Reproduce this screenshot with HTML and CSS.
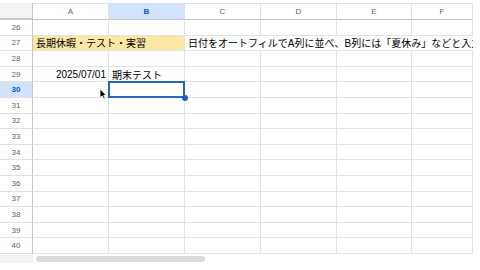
FILE: index.html
```html
<!DOCTYPE html>
<html lang="ja">
<head>
<meta charset="utf-8">
<link rel="stylesheet" href="styles.css">
</head>
<body>
<div class="page">
  <div class="sheet">
    <div class="corner"></div>
    <div class="ch">A</div>
    <div class="ch ch-sel">B</div>
    <div class="ch">C</div>
    <div class="ch">D</div>
    <div class="ch">E</div>
    <div class="ch">F</div>

    <div class="rh">26</div>
    <div class="c"></div><div class="c"></div><div class="c"></div><div class="c"></div><div class="c"></div><div class="c"></div>

    <div class="rh">27</div>
    <div class="c c-merge c-yellow">長期休暇・テスト・実習</div>
    <div class="c c-over">日付をオートフィルでA列に並べ、B列には「夏休み」などと入力してください</div>

    <div class="rh">28</div>
    <div class="c"></div><div class="c"></div><div class="c"></div><div class="c"></div><div class="c"></div><div class="c"></div>

    <div class="rh">29</div>
    <div class="c c-right">2025/07/01</div><div class="c">期末テスト</div><div class="c"></div><div class="c"></div><div class="c"></div><div class="c"></div>

    <div class="rh rh-sel">30</div>
    <div class="c c-rel">
      <svg class="cursor" width="8" height="12" viewBox="0 0 9 14"><path d="M1 1 L1 11.5 L3.6 9.2 L5.4 13 L7 12.3 L5.3 8.6 L8.4 8.4 Z" fill="#000" stroke="#fff" stroke-width="1"/></svg>
    </div>
    <div class="c c-rel"><div class="selbox"></div><div class="handle"></div></div>
    <div class="c"></div><div class="c"></div><div class="c"></div><div class="c"></div>

    <div class="rh">31</div>
    <div class="c"></div><div class="c"></div><div class="c"></div><div class="c"></div><div class="c"></div><div class="c"></div>
    <div class="rh">32</div>
    <div class="c"></div><div class="c"></div><div class="c"></div><div class="c"></div><div class="c"></div><div class="c"></div>
    <div class="rh">33</div>
    <div class="c"></div><div class="c"></div><div class="c"></div><div class="c"></div><div class="c"></div><div class="c"></div>
    <div class="rh">34</div>
    <div class="c"></div><div class="c"></div><div class="c"></div><div class="c"></div><div class="c"></div><div class="c"></div>
    <div class="rh">35</div>
    <div class="c"></div><div class="c"></div><div class="c"></div><div class="c"></div><div class="c"></div><div class="c"></div>
    <div class="rh">36</div>
    <div class="c"></div><div class="c"></div><div class="c"></div><div class="c"></div><div class="c"></div><div class="c"></div>
    <div class="rh">37</div>
    <div class="c"></div><div class="c"></div><div class="c"></div><div class="c"></div><div class="c"></div><div class="c"></div>
    <div class="rh">38</div>
    <div class="c"></div><div class="c"></div><div class="c"></div><div class="c"></div><div class="c"></div><div class="c"></div>
    <div class="rh">39</div>
    <div class="c"></div><div class="c"></div><div class="c"></div><div class="c"></div><div class="c"></div><div class="c"></div>
    <div class="rh">40</div>
    <div class="c"></div><div class="c"></div><div class="c"></div><div class="c"></div><div class="c"></div><div class="c"></div>
  </div>
  <div class="scrollrow">
    <div class="scroll-corner"></div>
    <div class="thumb"></div>
  </div>
</div>
</body>
</html>
```

FILE: styles.css
```css
html, body {
  margin: 0;
  padding: 0;
  background: #fff;
}
body {
  font-family: "Liberation Sans", Arial, "Noto Sans CJK JP", sans-serif;
  width: 480px;
  height: 270px;
  overflow: hidden;
}
.page {
  padding-top: 3px;
}
.sheet {
  display: grid;
  grid-template-columns: 33px 76px 76px 76px 76px 75px 61px;
  grid-template-rows: 17px repeat(15, 15.6px);
  width: 473px;
  overflow: hidden;
}
.corner {
  background: #f1f3f4;
  border-right: 1px solid #c4c7c5;
  border-bottom: 2px solid #c4c7c5;
}
.ch {
  display: flex;
  align-items: center;
  justify-content: center;
  font-size: 8px;
  color: #5f6368;
  border-right: 1px solid #e1e3e1;
  border-bottom: 1px solid #c4c7c5;
  border-top: 1px solid #e1e3e1;
  background: #fff;
}
.ch-sel {
  background: #d3e3fd;
  color: #0b57d0;
  font-weight: bold;
}
.rh {
  display: flex;
  align-items: center;
  justify-content: center;
  font-size: 8px;
  color: #5f6368;
  border-right: 1px solid #c4c7c5;
  border-bottom: 1px solid #e1e3e1;
  background: #fff;
}
.rh-sel {
  background: #d3e3fd;
  color: #0b57d0;
  font-weight: bold;
}
.c {
  border-right: 1px solid #e2e3e3;
  border-bottom: 1px solid #e2e3e3;
  font-size: 10px;
  color: #000;
  display: flex;
  align-items: center;
  padding: 0 3px;
  white-space: nowrap;
  overflow: hidden;
  min-width: 0;
}
.c-right {
  justify-content: flex-end;
  padding-right: 2px;
}
.c-merge {
  grid-column: span 2;
}
.c-yellow {
  background: #fde7a6;
}
.c-over {
  grid-column: span 4;
  border-right: none;
}
.c-rel {
  position: relative;
  overflow: visible;
}
.selbox {
  position: absolute;
  left: -1px;
  top: -1px;
  right: -1px;
  bottom: -1px;
  border: 2px solid #2566b5;
  z-index: 2;
}
.handle {
  position: absolute;
  right: -4px;
  bottom: -4px;
  width: 6px;
  height: 6px;
  border-radius: 50%;
  background: #1a5fc2;
  z-index: 3;
}
.cursor {
  position: absolute;
  left: 66px;
  top: 6px;
  z-index: 4;
}
.scrollrow {
  display: flex;
  align-items: center;
  gap: 3px;
  height: 8px;
  margin-top: 1px;
}
.scroll-corner {
  width: 33px;
  height: 8px;
  background: #f1f3f4;
}
.thumb {
  width: 169px;
  height: 6px;
  border-radius: 3px;
  background: #dadce0;
}
```
